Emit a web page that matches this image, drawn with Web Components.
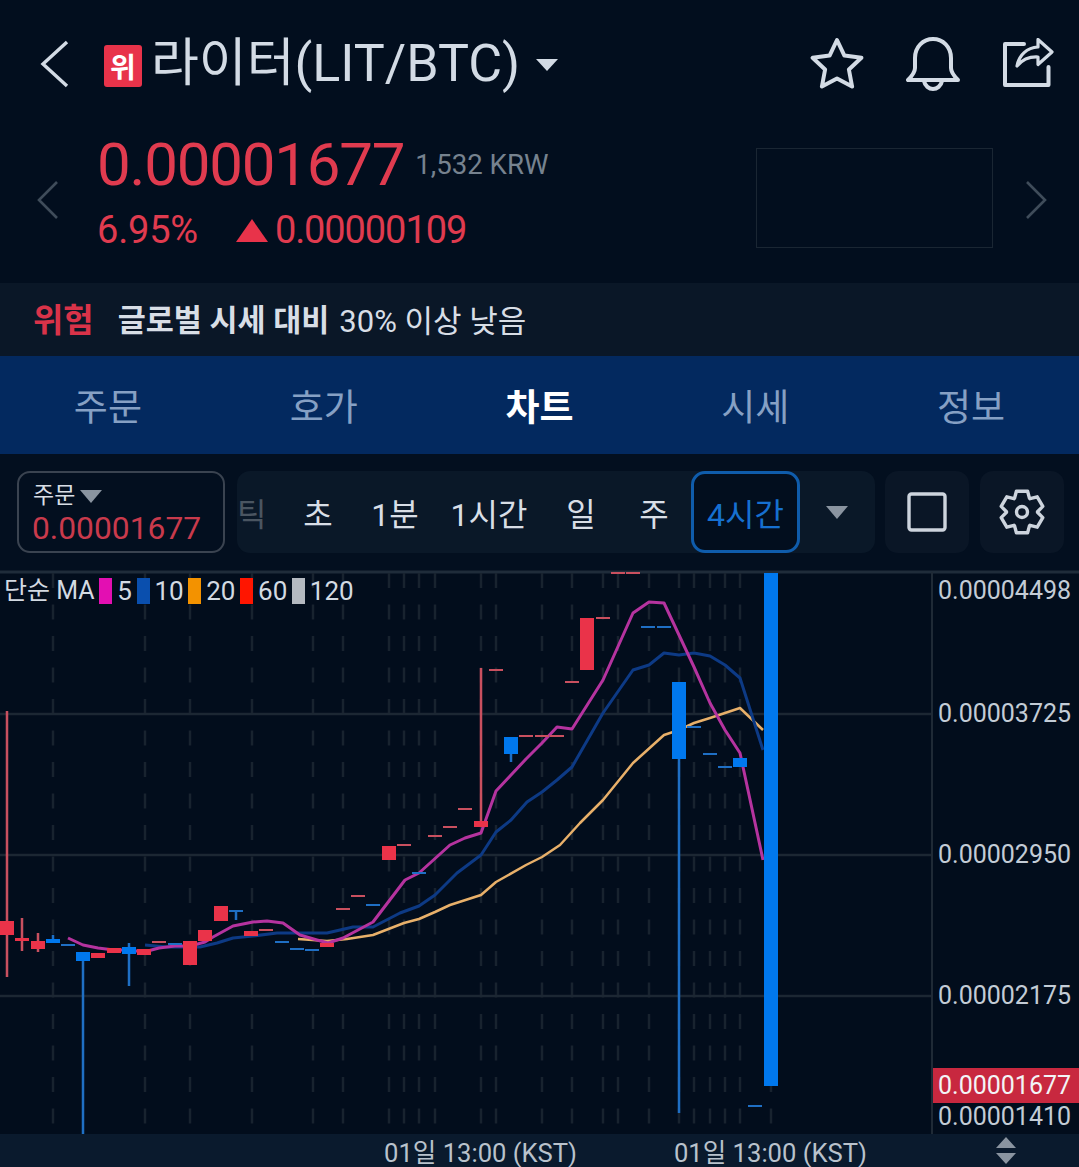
<!DOCTYPE html>
<html lang="ko">
<head>
<meta charset="utf-8">
<title>LIT/BTC</title>
<style>
    html, body { margin: 0; padding: 0; background: #020e1e; }
    body { width: 1079px; height: 1167px; overflow: hidden; font-family: Roboto, "Noto Sans CJK KR", sans-serif; }
</style>
</head>
<body>
<coin-header></coin-header>
<price-panel></price-panel>
<warn-bar></warn-bar>
<tab-bar></tab-bar>
<chart-toolbar></chart-toolbar>
<candle-chart></candle-chart>
<time-axis></time-axis>
<script>
const FONT = `Roboto, "Noto Sans CJK KR", sans-serif`;

class CoinHeader extends HTMLElement {
    constructor() {
        super();
        const shadow = this.attachShadow({mode: 'open'});
        shadow.innerHTML = `
            <style>
                :host { display: flex; align-items: center; height: 128px; padding-left: 40px; padding-right: 25px; box-sizing: border-box; font-family: ${FONT}; color: #d3dbe5; }
                .badge { width: 38px; height: 42px; margin-left: 34px; margin-top: 3px; background: #e8334a; border-radius: 3px; color: #fff; font-size: 28px; font-weight: 700; display: flex; align-items: center; justify-content: center; }
                .name { margin-left: 9px; font-size: 52px; font-weight: 400; line-height: 60px; white-space: nowrap; }
                .caret { margin-left: 16px; margin-top: 2px; }
                .icons { margin-left: auto; display: flex; gap: 42px; align-items: center; }
                svg { display: block; }
            </style>
            <svg width="30" height="48" viewBox="0 0 30 48" fill="none" stroke="#d3dbe5" stroke-width="3.4"><path d="M27 2 3 24l24 22"/></svg>
            <span class="badge">위</span>
            <span class="name">라이터(LIT/BTC)</span>
            <svg class="caret" width="22" height="12" viewBox="0 0 22 12"><path d="M0 0h22L11 12z" fill="#d3dbe5"/></svg>
            <div class="icons">
                <svg width="54" height="54" viewBox="0 0 54 54" fill="none" stroke="#d3dbe5" stroke-width="4" stroke-linejoin="round"><path d="M27 3l7.400 15.600 17 2.200-12.500 11.700 3.200 17L27 41.400l-15.100 8.100 3.200-17L2.600 20.800l17-2.200z"/></svg>
                <svg width="54" height="54" viewBox="0 0 54 54" fill="none" stroke="#d3dbe5" stroke-width="4" stroke-linecap="round" stroke-linejoin="round"><path d="M2 43h50c-4-4-7-8-7-12V21C45 10 37 2 27 2S9 10 9 21v10c0 4-3 8-7 12z"/><path d="M18 44c1 5 5 8 9 8s8-3 9-8"/></svg>
                <svg width="52" height="52" viewBox="0 0 52 52" fill="none" stroke="#d3dbe5" stroke-width="4" stroke-linecap="round" stroke-linejoin="round"><path d="M22 6H3v41h43.500V29"/><path d="M15 28C17 17 25 9.500 36 9V1.500L50 14 36 26.500V19C27 18.500 20 22 15 28z" stroke-width="3.2"/></svg>
            </div>
        `;
    }
}

class PricePanel extends HTMLElement {
    constructor() {
        super();
        const shadow = this.attachShadow({mode: 'open'});
        shadow.innerHTML = `
            <style>
                :host { display: flex; align-items: flex-start; height: 155px; box-sizing: border-box; font-family: ${FONT}; color: #e03b4f; }
                .arrow { margin-top: 53px; }
                .left { margin-left: 37px; }
                .main { margin-left: 38px; }
                .top { display: flex; align-items: flex-start; height: 72px; padding-top: 3px; box-sizing: border-box; }
                .price { font-size: 60px; line-height: 68px; font-weight: 400; letter-spacing: -1.2px; }
                .krw { margin-left: 11px; margin-top: 17px; font-size: 27.6px; line-height: 34px; color: #76828f; }
                .sub { display: flex; align-items: center; font-size: 38px; line-height: 44px; margin-top: 8px; font-weight: 400; letter-spacing: -0.2px; }
                .sub .chg { letter-spacing: -1.1px; }
                .tri { margin-left: 38px; margin-right: 7px; }
                .box { width: 237px; height: 100px; border: 1px solid #1a2633; box-sizing: border-box; margin-left: auto; margin-top: 20px; }
                .right { margin-left: 32px; margin-right: 32px; }
            </style>
            <svg class="arrow left" width="22" height="38" viewBox="0 0 22 38" fill="none" stroke="#3f4c5a" stroke-width="2.6"><path d="M20 1 2 19l18 18"/></svg>
            <div class="main">
                <div class="top"><span class="price">0.00001677</span><span class="krw">1,532 KRW</span></div>
                <div class="sub"><span>6.95%</span><svg class="tri" width="32" height="23" viewBox="0 0 32 23"><path d="M16 0 32 23H0z" fill="#e8334a"/></svg><span class="chg">0.00000109</span></div>
            </div>
            <div class="box"></div>
            <svg class="arrow right" width="22" height="38" viewBox="0 0 22 38" fill="none" stroke="#3f4c5a" stroke-width="2.6"><path d="M2 1l18 18L2 37"/></svg>
        `;
    }
}

class WarnBar extends HTMLElement {
    constructor() {
        super();
        const shadow = this.attachShadow({mode: 'open'});
        shadow.innerHTML = `
            <style>
                :host { display: flex; align-items: center; height: 73px; padding: 0 0 3px 33px; box-sizing: border-box; background: #0a1727; font-family: ${FONT}; font-size: 31px; color: #d8dee6; white-space: nowrap; }
                .tag { color: #d93349; font-weight: 700; font-size: 33px; margin-right: 24px; }
                b { font-weight: 700; font-size: 30.5px; margin-right: 10px; }
            </style>
            <span class="tag">위험</span><b>글로벌 시세 대비</b><span>30% 이상 낮음</span>
        `;
    }
}

class TabBar extends HTMLElement {
    constructor() {
        super();
        const shadow = this.attachShadow({mode: 'open'});
        const tabs = ['주문', '호가', '차트', '시세', '정보'];
        shadow.innerHTML = `
            <style>
                :host { display: grid; grid-template-columns: repeat(5, 1fr); height: 98px; background: #03295f; font-family: ${FONT}; font-size: 37px; color: #86a0c4; }
                div { display: flex; align-items: center; justify-content: center; }
                .on { color: #fff; font-weight: 700; }
            </style>
            ${tabs.map(t => `<div class="${t === '차트' ? 'on' : ''}">${t}</div>`).join('')}
        `;
    }
}

// six flat-topped teeth around (23,23)
function gearPoints() {
    const pts = [];
    for (let i = 0; i < 6; i++) {
        const a = -90 + i * 60;
        [[15.5, -29], [21.5, -15], [21.5, 15], [15.5, 29]].forEach(([r, d]) => {
            const t = (a + d) * Math.PI / 180;
            pts.push(`${(23 + r * Math.cos(t)).toFixed(1)},${(23 + r * Math.sin(t)).toFixed(1)}`);
        });
    }
    return pts.join(' ');
}

class ChartToolbar extends HTMLElement {
    constructor() {
        super();
        const shadow = this.attachShadow({mode: 'open'});
        shadow.innerHTML = `
            <style>
                :host { display: flex; height: 116px; padding: 17px 15px 0 17px; box-sizing: border-box; font-family: ${FONT}; color: #d8dee6; background: #030f1f; }
                .order { width: 208px; height: 82px; box-sizing: border-box; border: 2px solid #3a4350; border-radius: 13px; padding: 9px 0 0 14px; }
                .order .lbl { display: flex; align-items: center; gap: 5px; font-size: 23px; line-height: 28px; }
                .order .val { font-size: 31.8px; line-height: 36px; color: #c93a4c; margin-left: -1px; }
                .group { margin-left: 12px; width: 638px; height: 82px; background: #0a1828; border-radius: 13px; display: flex; align-items: center; font-size: 32px; overflow: hidden; }
                .item { display: flex; justify-content: center; flex: none; white-space: nowrap; }
                .tick { color: #4a5561; width: 27px; justify-content: flex-start; overflow: hidden; }
                .cur { width: 109px; height: 82px; box-sizing: border-box; border: 3px solid #0f5cab; border-radius: 14px; background: #020e1e; color: #1670d0; align-items: center; }
                .btn { width: 84px; height: 82px; background: #0a1626; border-radius: 13px; display: flex; align-items: center; justify-content: center; margin-left: 10px; }
                .btn + .btn { margin-left: 11px; }
                svg { display: block; }
            </style>
            <div class="order">
                <div class="lbl">주문<svg width="22" height="13" viewBox="0 0 22 13"><path d="M0 0h22L11 13z" fill="#8a94a0"/></svg></div>
                <div class="val">0.00001677</div>
            </div>
            <div class="group">
                <span class="item tick">틱</span>
                <span class="item" style="width:108px">초</span>
                <span class="item" style="width:46px">1분</span>
                <span class="item" style="width:142px">1시간</span>
                <span class="item" style="width:42px;margin-right:15px">일</span>
                <span class="item" style="width:74px">주</span>
                <span class="item cur">4시간</span>
                <svg style="margin-left:26px" width="22" height="13" viewBox="0 0 22 13"><path d="M0 0h22L11 13z" fill="#8a94a0"/></svg>
            </div>
            <div class="btn"><svg width="40" height="40" viewBox="0 0 40 40" fill="none" stroke="#cdd4dd" stroke-width="3.4"><rect x="2" y="2" width="36" height="36" rx="2.5"/></svg></div>
            <div class="btn"><svg width="46" height="46" viewBox="0 0 46 46" fill="none" stroke="#cdd4dd" stroke-width="3.4" stroke-linejoin="round"><polygon points="${gearPoints()}"/><circle cx="23" cy="23" r="5.5"/></svg></div>
        `;
    }
}

// [center x, body top, body bottom, wick top, wick bottom, up?]
const CANDLES = [
    [7, 921, 935, 711, 977, 1], [22, 938, 941, 918, 951, 1], [38, 941, 949, 933, 952, 1], [53, 939, 943, 935, 943, 0],
    [68, 944, 946, 0, 0, 0], [83, 952, 961, 952, 1134, 0], [98, 953, 958, 0, 0, 1], [114, 948, 953, 0, 0, 1],
    [129, 947, 954, 943, 986, 0], [144, 949, 955, 0, 0, 1], [159, 941, 943, 0, 0, 1], [175, 943, 945, 0, 0, 0],
    [190, 941, 965, 0, 0, 1], [205, 930, 941, 0, 0, 1], [221, 906, 921, 0, 0, 1], [236, 910, 912, 910, 920, 0],
    [251, 931, 936, 0, 0, 1], [266, 929, 931, 0, 0, 1], [282, 941, 943, 0, 0, 0], [297, 948, 950, 0, 0, 0],
    [312, 949, 951, 0, 0, 0], [327, 943, 947, 0, 0, 1], [343, 908, 910, 0, 0, 1], [358, 895, 897, 0, 0, 1],
    [373, 904, 906, 0, 0, 0], [389, 846, 860, 0, 0, 1], [404, 844, 846, 0, 0, 1], [419, 872, 874, 0, 0, 0],
    [435, 835, 837, 0, 0, 1], [450, 826, 828, 0, 0, 1], [465, 808, 810, 0, 0, 1], [481, 821, 827, 668, 827, 1],
    [496, 669, 671, 0, 0, 1], [511, 737, 754, 737, 762, 0], [526, 735, 737, 0, 0, 1], [542, 735, 737, 0, 0, 1],
    [557, 735, 737, 0, 0, 1], [572, 681, 683, 0, 0, 1], [587, 618, 670, 0, 0, 1], [603, 617, 619, 0, 0, 1],
    [618, 572, 574, 0, 0, 1], [633, 572, 574, 0, 0, 1], [648, 626, 628, 0, 0, 0], [664, 626, 628, 0, 0, 0],
    [679, 682, 759, 682, 1113, 0], [694, 726, 728, 0, 0, 0], [710, 753, 755, 0, 0, 0], [725, 766, 768, 0, 0, 0],
    [740, 758, 767, 0, 0, 0], [755, 1105, 1107, 0, 0, 0], [771, 573, 1086, 0, 0, 0]
];

const MA5 = [[68,938],[83,945],[98,948],[114,950],[129,950],[144,952],[159,948],[175,946],[190,946],[205,942],[213,937],[233,926],[253,922],[267,921],[283,923],[300,935],[317,940],[328,943],[343,938],[373,922],[405,880],[419,873],[450,845],[465,838],[481,833],[496,791],[511,775],[526,759],[542,743],[557,727],[572,729],[603,680],[633,613],[649,602],[664,603],[694,667],[710,703],[725,730],[740,753],[763,860]];
const MA10 = [[145,945],[167,947],[180,947],[200,947],[217,943],[233,938],[253,936],[277,933],[300,933],[327,933],[353,927],[373,927],[400,913],[419,906],[435,895],[457,873],[481,855],[496,832],[511,820],[527,802],[542,792],[557,780],[572,767],[603,713],[633,670],[649,665],[664,653],[679,655],[694,653],[710,656],[725,665],[740,678],[763,750]];
const MA20 = [[298,939],[327,941],[347,939],[373,935],[404,923],[419,919],[435,912],[450,905],[481,895],[496,882],[526,865],[542,857],[560,845],[580,823],[603,800],[633,763],[664,735],[679,730],[694,723],[710,718],[725,713],[740,708],[763,730]];
const GRID_X = [53, 145, 190, 252, 313, 343, 389, 404, 419, 435, 481, 496, 542, 572, 603, 618, 649, 679, 694, 710, 725, 740, 771];

class CandleChart extends HTMLElement {
    constructor() {
        super();
        const shadow = this.attachShadow({mode: 'open'});
        const off = 570; // svg top in page coords
        const grid = GRID_X.map(x => `<path d="M${x} 573V1134" stroke="#18232f" stroke-width="2.5" stroke-dasharray="15 16.5"/>`).join('');
        const hlines = [714, 855, 996].map(y => `<path d="M0 ${y}H932" stroke="#1c2733" stroke-width="2.5"/>`).join('');
        const line = (pts, col, w) => `<polyline points="${pts.map(p => p.join(',')).join(' ')}" fill="none" stroke="${col}" stroke-width="${w}" stroke-linejoin="round"/>`;
        const candles = CANDLES.map(([x, t, b, wt, wb, up]) => {
            const body = up ? '#ea3349' : '#0078ee';
            const wick = up ? '#c9505f' : '#1f6fc4';
            const thin = b - t <= 2;
            let s = '';
            if (wb) s += `<rect x="${x - 1.25}" y="${wt}" width="2.5" height="${wb - wt}" fill="${wick}"/>`;
            s += `<rect x="${x - 7}" y="${t}" width="14" height="${b - t}" fill="${thin ? wick : body}"/>`;
            return s;
        }).join('');
        shadow.innerHTML = `
            <style>
                :host { display: block; height: 564px; position: relative; background: #020d1c; font-family: ${FONT}; color: #d3dae2; overflow: hidden; }
                svg { position: absolute; left: 0; top: 0; display: block; }
                .legend { position: absolute; left: 4px; top: 8px; display: flex; align-items: center; font-size: 26px; line-height: 26px; white-space: nowrap; }
                .sw { width: 13px; height: 26px; margin: 0 4.8px; flex: none; }
                .axis span { position: absolute; left: 938px; font-size: 25px; line-height: 30px; color: #c3ccd6; white-space: nowrap; }
                .axis .now { left: 933px; width: 146px; padding-left: 5px; box-sizing: border-box; height: 35px; line-height: 36px; background: #c8283f; color: #f3f4f6; }
            </style>
            <svg width="1079" height="564" viewBox="0 ${off} 1079 564">
                <path d="M0 572H1079" stroke="#1f2c3a" stroke-width="3"/>
                ${grid}${hlines}
                <path d="M932 572V1134" stroke="#1f2a36" stroke-width="2"/>
                ${line(MA20, '#e8b06a', 2.5)}${line(MA10, '#0d3a85', 3)}${line(MA5, '#b5339f', 3)}
                ${candles}
            </svg>
            <div class="legend">
                <span style="font-size:25px">단순 MA</span>
                <i class="sw" style="background:#e30fb2"></i><span>5</span>
                <i class="sw" style="background:#0a4fae"></i><span>10</span>
                <i class="sw" style="background:#f39200"></i><span>20</span>
                <i class="sw" style="background:#ff1500"></i><span>60</span>
                <i class="sw" style="background:#b4b9c0"></i><span>120</span>
            </div>
            <div class="axis">
                <span style="top:6px">0.00004498</span>
                <span style="top:129px">0.00003725</span>
                <span style="top:270px">0.00002950</span>
                <span style="top:411px">0.00002175</span>
                <span class="now" style="top:498px">0.00001677</span>
                <span style="top:532px">0.00001410</span>
            </div>
        `;
    }
}

class TimeAxis extends HTMLElement {
    constructor() {
        super();
        const shadow = this.attachShadow({mode: 'open'});
        shadow.innerHTML = `
            <style>
                :host { display: flex; align-items: center; height: 33px; padding-left: 384px; background: #0a1a2d; font-family: ${FONT}; font-size: 25.6px; color: #b9c2cc; white-space: nowrap; overflow: hidden; }
                span + span { margin-left: 97px; }
                svg { margin-left: 129px; flex: none; }
            </style>
            <span>01일 13:00 (KST)</span><span>01일 13:00 (KST)</span>
            <svg width="20" height="27" viewBox="0 0 20 27"><path d="M10 0l10 11H0zM10 27 0 16h20z" fill="#8a94a0"/></svg>
        `;
    }
}

customElements.define('coin-header', CoinHeader);
customElements.define('price-panel', PricePanel);
customElements.define('warn-bar', WarnBar);
customElements.define('tab-bar', TabBar);
customElements.define('chart-toolbar', ChartToolbar);
customElements.define('candle-chart', CandleChart);
customElements.define('time-axis', TimeAxis);
</script>
</body>
</html>
